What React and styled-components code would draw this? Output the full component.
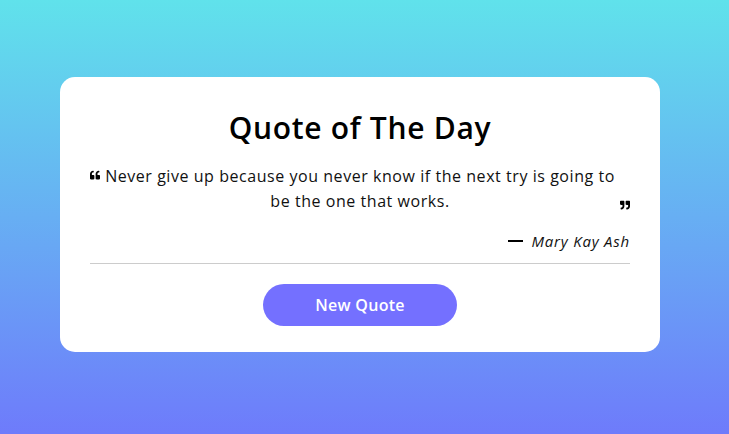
import React from "react";
import styled, { createGlobalStyle } from "styled-components";
import { FaQuoteLeft, FaQuoteRight } from "react-icons/fa";

const Global = createGlobalStyle`
  * { box-sizing: border-box; margin: 0; padding: 0; }
  html, body { height: 100%; }
  body {
    font-family: "Open Sans", "Liberation Sans", sans-serif;
    background: linear-gradient(to bottom, #60e2eb, #6e7bfb);
    min-height: 100vh;
  }
  #root { height: 100%; }
`;

const Page = styled.div`
  min-height: 434px;
  display: flex;
  align-items: center;
  justify-content: center;
  padding: 0 9px 5px 0;
`;

const Card = styled.div`
  width: 600px;
  background: #fff;
  border-radius: 15px;
  padding: 29px 30px 26px;
`;

const Title = styled.h1`
  text-align: center;
  font-size: 30px;
  font-weight: 600;
  letter-spacing: 0.7px;
  color: #000;
  line-height: 44px;
`;

const QuoteArea = styled.div`
  display: flex;
  margin-top: 14px;
`;

const QuoteIcon = styled.span`
  display: flex;
  flex: 0 0 10px;
  font-size: 10px;
  color: #000;
  align-self: ${(p) => (p.$end ? "flex-end" : "flex-start")};
  margin-top: ${(p) => (p.$end ? "0" : "6px")};
  margin-bottom: ${(p) => (p.$end ? "4px" : "0")};
`;

const QuoteText = styled.p`
  flex: 1;
  text-align: center;
  font-size: 16px;
  letter-spacing: 0.55px;
  line-height: 25px;
  color: #111;
`;

const Author = styled.div`
  display: flex;
  justify-content: flex-end;
  align-items: center;
  gap: 8px;
  margin-top: 17px;
  font-size: 15px;
  font-style: italic;
  letter-spacing: 0.8px;
  color: #111;
  line-height: 20px;
`;

const Dash = styled.span`
  display: block;
  width: 15px;
  height: 2px;
  background: #000;
`;

const Divider = styled.hr`
  border: none;
  border-top: 1px solid #ccc;
  margin-top: 12px;
`;

const Actions = styled.div`
  display: flex;
  justify-content: center;
  margin-top: 20px;
`;

const Button = styled.button`
  width: 194px;
  height: 42px;
  border: none;
  border-radius: 21px;
  background: #7470ff;
  color: #fff;
  font-family: inherit;
  font-size: 16px;
  font-weight: 600;
  letter-spacing: 0.3px;
  cursor: pointer;
`;

export default function App() {
  return (
    <>
      <Global />
      <Page>
        <Card>
          <Title>Quote of The Day</Title>
          <QuoteArea>
            <QuoteIcon>
              <FaQuoteLeft />
            </QuoteIcon>
            <QuoteText>
              Never give up because you never know if the next try is going to be the one that works.
            </QuoteText>
            <QuoteIcon $end>
              <FaQuoteRight />
            </QuoteIcon>
          </QuoteArea>
          <Author>
            <Dash />
            <span>Mary Kay Ash</span>
          </Author>
          <Divider />
          <Actions>
            <Button>New Quote</Button>
          </Actions>
        </Card>
      </Page>
    </>
  );
}
